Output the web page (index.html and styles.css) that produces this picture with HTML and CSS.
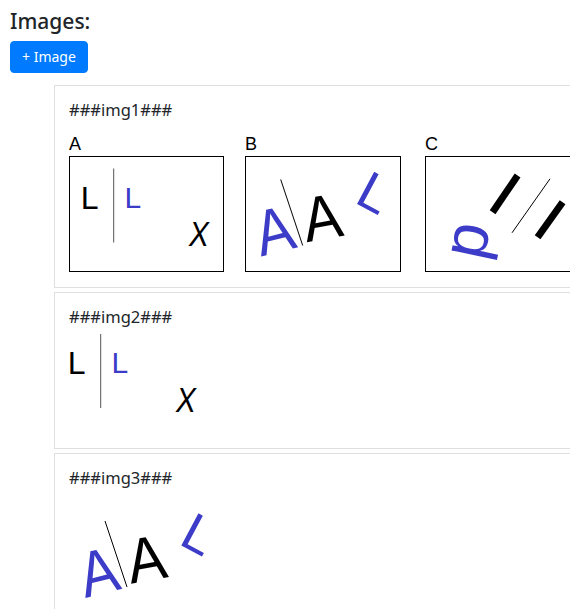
FILE: index.html
```html
<!DOCTYPE html>
<html lang="en">
<head>
    <meta charset="UTF-8">
    <title>Images</title>
    <link rel="stylesheet" href="styles.css">
</head>
<body>
    <h5 class="title">Images:</h5>
    <button class="add-button">+ Image</button>

    <div class="image-list">
        <!-- img1: three framed figures -->
        <div class="image-card">
            <div class="image-name">###img1###</div>
            <div class="figure-row">
                <div class="figure figure-a">
                    <div class="figure-label">A</div>
                    <svg class="figure-box" width="153" height="114">
                        <text x="10.7" y="51.5" class="glyph" font-size="32">L</text>
                        <line x1="43.7" y1="11.5" x2="43.7" y2="85.5" stroke="#555" stroke-width="1"/>
                        <text x="54.5" y="50.5" class="glyph blue" font-size="30">L</text>
                        <text x="0" y="0" class="glyph italic" font-size="35" transform="translate(119,89.2) scale(0.85,1)">X</text>
                    </svg>
                </div>
                <div class="figure figure-b">
                    <div class="figure-label">B</div>
                    <svg class="figure-box" width="154" height="114">
                        <text class="glyph blue" font-size="64" transform="translate(15,99.5) rotate(-14) scale(0.9,1)">A</text>
                        <line x1="34.7" y1="22.5" x2="56.7" y2="88.5" stroke="#000" stroke-width="1"/>
                        <text class="glyph" font-size="63" transform="translate(60.7,85.2) rotate(-10) scale(0.92,1)">A</text>
                        <text class="glyph blue" font-size="53" transform="translate(107.3,45) rotate(28)">L</text>
                    </svg>
                </div>
                <div class="figure figure-c">
                    <div class="figure-label">C</div>
                    <svg class="figure-box" width="154" height="114">
                        <text class="glyph blue" font-size="63" transform="translate(57.3,104.5) rotate(-78)">p</text>
                        <line x1="91.6" y1="18.5" x2="66.6" y2="55.2" stroke="#000" stroke-width="7"/>
                        <line x1="124" y1="21.8" x2="86" y2="75.8" stroke="#000" stroke-width="1"/>
                        <line x1="136.6" y1="45.2" x2="111.6" y2="80.2" stroke="#000" stroke-width="7"/>
                    </svg>
                </div>
            </div>
        </div>

        <!-- img2: figure A without frame -->
        <div class="image-card">
            <div class="image-name">###img2###</div>
            <svg class="image-plain" width="160" height="104">
                <g transform="translate(-12,-6.5)">
                    <text x="10.7" y="51.5" class="glyph" font-size="32">L</text>
                    <line x1="43.7" y1="11.5" x2="43.7" y2="85.5" stroke="#555" stroke-width="1"/>
                    <text x="54.5" y="50.5" class="glyph blue" font-size="30">L</text>
                    <text x="0" y="0" class="glyph italic" font-size="35" transform="translate(119,89.2) scale(0.85,1)">X</text>
                </g>
            </svg>
        </div>

        <!-- img3: figure B without frame -->
        <div class="image-card">
            <div class="image-name">###img3###</div>
            <svg class="image-plain" width="160" height="130">
                <g transform="translate(1.3,8.5)">
                    <text class="glyph blue" font-size="64" transform="translate(15,99.5) rotate(-14) scale(0.9,1)">A</text>
                    <line x1="34.7" y1="22.5" x2="56.7" y2="88.5" stroke="#000" stroke-width="1"/>
                    <text class="glyph" font-size="63" transform="translate(60.7,85.2) rotate(-10) scale(0.92,1)">A</text>
                    <text class="glyph blue" font-size="53" transform="translate(107.3,45) rotate(28)">L</text>
                </g>
            </svg>
        </div>
    </div>
</body>
</html>
```

FILE: styles.css
```css
html, body {
    overflow: hidden;
}

body {
    margin: 0;
    padding: 0 10px;
    font-family: "Noto Sans", "Open Sans", sans-serif;
    color: #212529;
    background-color: white;
}

.title {
    font-size: 21px;
    font-weight: 500;
    line-height: 1.2;
    margin: 9px 0 7px;
}

.add-button {
    display: block;
    font-family: inherit;
    font-size: 14px;
    line-height: 20px;
    padding: 5px 11px;
    color: white;
    background-color: #007bff;
    border: 1px solid #007bff;
    border-radius: 4px;
    cursor: pointer;
}

.image-list {
    margin: 12px 0 0 44px;
}

.image-card {
    width: 560px;
    border: 1px solid #dfdfdf;
    padding: 12px 14px 15px;
    margin-bottom: 4px;
}

.image-name {
    font-size: 16.5px;
    line-height: 24px;
}

.figure-row {
    display: flex;
    margin-top: 12px;
}

.figure-a {
    margin-right: 21px;
}

.figure-b {
    margin-right: 24px;
}

.figure-label {
    font-family: "Liberation Sans", Arial, sans-serif;
    font-size: 18px;
    line-height: 21px;
    color: black;
    margin-bottom: 1px;
}

.figure-box {
    display: block;
    border: 1px solid black;
}

.image-plain {
    display: block;
}

.glyph {
    font-family: "Liberation Sans", Arial, sans-serif;
    fill: black;
}

.glyph.blue {
    fill: #3c3cc8;
}

.glyph.italic {
    font-style: italic;
}
```
